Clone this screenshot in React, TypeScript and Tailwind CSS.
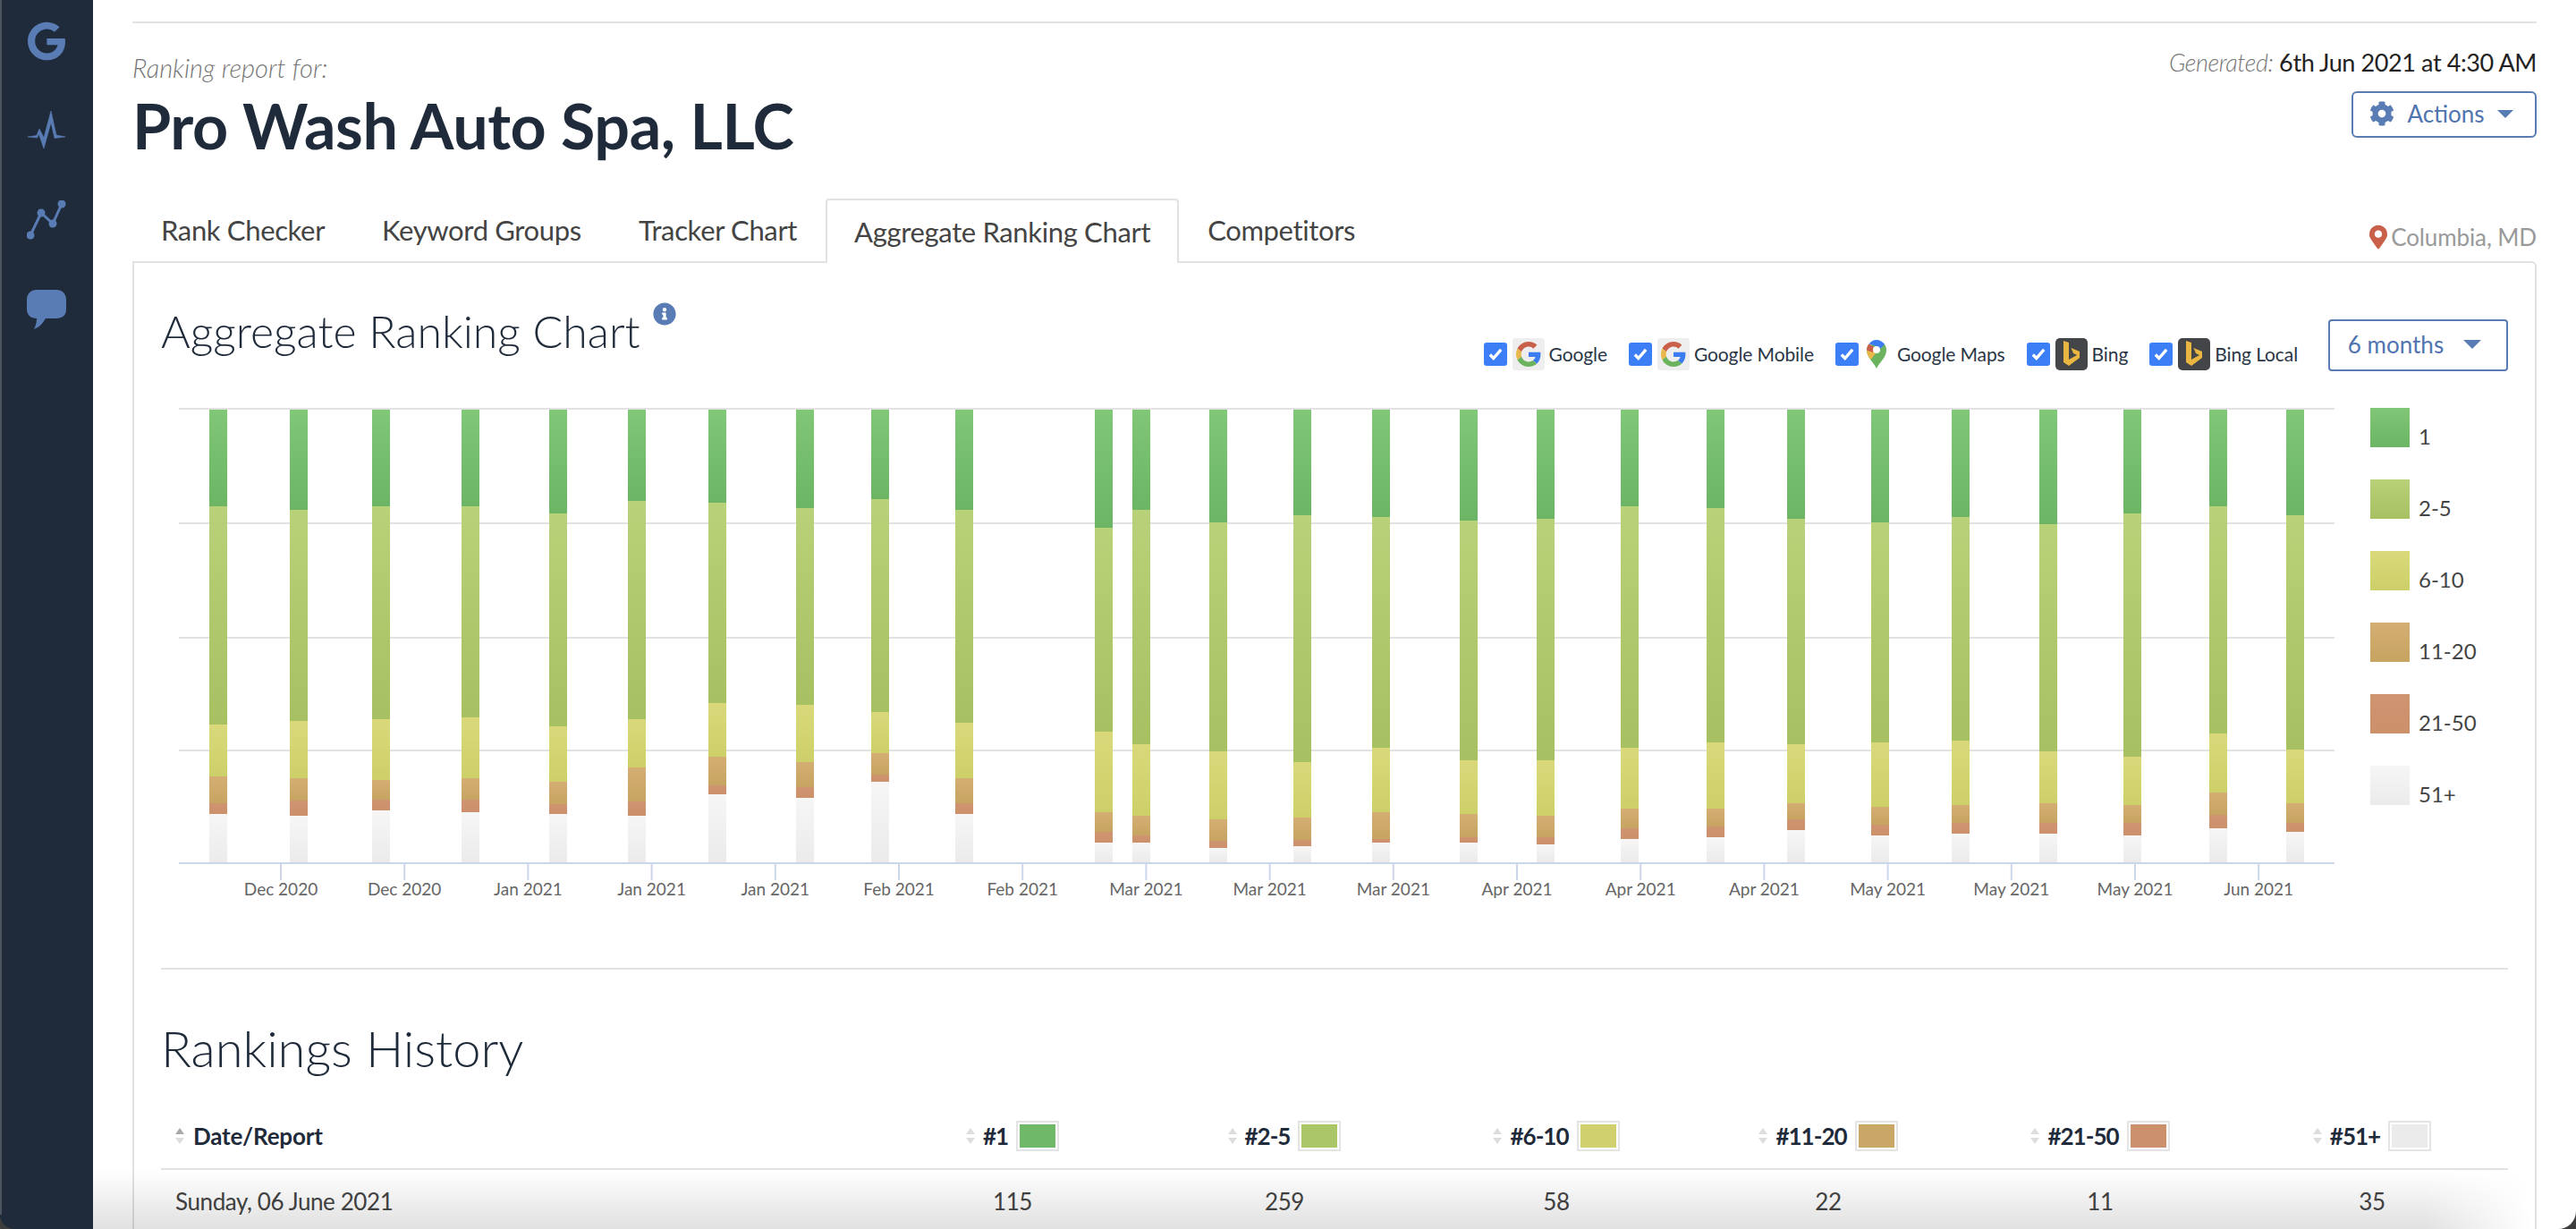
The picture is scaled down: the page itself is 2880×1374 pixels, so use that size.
import { FaCog, FaGoogle, FaInfoCircle, FaMapMarkerAlt } from 'react-icons/fa';

const tabs = ['Rank Checker', 'Keyword Groups', 'Tracker Chart', 'Aggregate Ranking Chart', 'Competitors'];

// left edge of each bar, then the y where each stacked segment ends (page px)
const bars = [
  [234, 566, 810, 868, 898, 910],
  [324, 570, 806, 870, 895, 912],
  [416, 566, 804, 872, 894, 906],
  [516, 566, 802, 870, 894, 908],
  [614, 574, 812, 874, 899, 910],
  [702, 560, 804, 858, 896, 912],
  [792, 562, 786, 846, 878, 888],
  [890, 568, 788, 852, 880, 892],
  [974, 558, 796, 842, 866, 874],
  [1068, 570, 808, 870, 898, 910],
  [1224, 590, 818, 908, 930, 942],
  [1266, 570, 832, 912, 934, 942],
  [1352, 584, 840, 916, 940, 948],
  [1446, 576, 852, 914, 939, 946],
  [1534, 578, 836, 908, 938, 942],
  [1632, 582, 850, 910, 936, 942],
  [1718, 580, 850, 912, 936, 944],
  [1812, 566, 836, 904, 926, 938],
  [1908, 568, 830, 904, 924, 936],
  [1998, 580, 832, 898, 916, 928],
  [2092, 584, 830, 902, 922, 934],
  [2182, 578, 828, 900, 920, 932],
  [2280, 586, 840, 898, 920, 932],
  [2374, 574, 846, 900, 920, 934],
  [2470, 566, 820, 886, 911, 926],
  [2556, 576, 838, 898, 920, 930],
];

const xLabels = [
  'Dec 2020', 'Dec 2020', 'Jan 2021', 'Jan 2021', 'Jan 2021', 'Feb 2021', 'Feb 2021', 'Mar 2021', 'Mar 2021',
  'Mar 2021', 'Apr 2021', 'Apr 2021', 'Apr 2021', 'May 2021', 'May 2021', 'May 2021', 'Jun 2021',
];

const segColors = [
  ['#80c777', '#6bb564'],
  ['#b9d178', '#a6c062'],
  ['#d9d97a', '#cdd069'],
  ['#d4ae72', '#c7a462'],
  ['#cf9470', '#cc906b'],
  ['#f6f6f6', '#ebebeb'],
];

const legend = [
  { label: '1', swatch: 'from-[#80c777] to-[#6bb564]' },
  { label: '2-5', swatch: 'from-[#b9d178] to-[#a6c062]' },
  { label: '6-10', swatch: 'from-[#d9d97a] to-[#cdd069]' },
  { label: '11-20', swatch: 'from-[#d4ae72] to-[#c7a462]' },
  { label: '21-50', swatch: 'from-[#cf9470] to-[#cc906b]' },
  { label: '51+', swatch: 'from-[#f6f6f6] to-[#ebebeb]' },
];

const columns = [
  { label: '#1', color: 'bg-[#6fb868]', value: 115 },
  { label: '#2-5', color: 'bg-[#abc667]', value: 259 },
  { label: '#6-10', color: 'bg-[#d0d16e]', value: 58 },
  { label: '#11-20', color: 'bg-[#c9a766]', value: 22 },
  { label: '#21-50', color: 'bg-[#cc916c]', value: 11 },
  { label: '#51+', color: 'bg-[#ebebeb]', value: 35 },
];

function GoogleIcon() {
  return (
    <span className="flex h-[36px] w-[36px] items-center justify-center rounded-[4px] bg-[#eeeeee]">
      <svg viewBox="0 0 48 48" className="h-[28px] w-[28px]">
        <path fill="#c9604a" d="M24 9.5c3.54 0 6.71 1.22 9.21 3.6l6.85-6.85C35.9 2.38 30.47 0 24 0 14.62 0 6.51 5.38 2.56 13.22l7.98 6.19C12.43 13.72 17.74 9.5 24 9.5z" />
        <path fill="#3b7df0" d="M46.98 24.55c0-1.57-.15-3.09-.38-4.55H24v9.02h12.94c-.58 2.96-2.26 5.48-4.78 7.18l7.73 6c4.51-4.18 7.09-10.36 7.09-17.65z" />
        <path fill="#e8b84a" d="M10.53 28.59c-.48-1.45-.76-2.99-.76-4.59s.27-3.14.76-4.59l-7.98-6.19C.92 16.46 0 20.12 0 24c0 3.88.92 7.54 2.56 10.78l7.97-6.19z" />
        <path fill="#6bb35e" d="M24 48c6.48 0 11.93-2.13 15.89-5.81l-7.73-6c-2.15 1.45-4.92 2.3-8.16 2.3-6.26 0-11.57-4.22-13.47-9.91l-7.98 6.19C6.51 42.62 14.62 48 24 48z" />
      </svg>
    </span>
  );
}

function MapsIcon() {
  return (
    <svg viewBox="0 0 24 32" className="h-[32px] w-[24px]">
      <path fill="#6bb35e" d="M12 32C9 25 1 20 1 11.5 1 9 2 7 3 5.500L21 5c1.500 2 2 4 2 6.500C23 20 15 25 12 32z" />
      <path fill="#e8b84a" d="M1 11.500c0 4 2 7.500 4.500 10.500L11 15 5 9z" />
      <path fill="#c9604a" d="M3.500 4.500C1.800 6.300 1 8.800 1 11.500L8 14l1-6z" />
      <path fill="#3b7df0" d="M3.500 4.500C5.500 1.800 8.500 0 12 0c3.800 0 7 2 9 5l-6 6-3-4z" />
      <circle cx="12" cy="11" r="4" fill="#ffffff" />
    </svg>
  );
}

function BingIcon() {
  return (
    <span className="flex h-[36px] w-[36px] items-center justify-center rounded-[5px] bg-[#444548]">
      <svg viewBox="0 0 24 32" className="h-[32px] w-[24px]">
        <path fill="#e9b741" d="M3 1l6 2v19l9-5-4-2-2.500-6L21 13v7L9 29l-6-4z" />
      </svg>
    </span>
  );
}

function SourceCheck({ icon, label }: { icon: React.ReactNode; label: string }) {
  return (
    <label className="flex items-center">
      <span className="mr-[6px] flex h-[26px] w-[26px] items-center justify-center rounded-[3px] bg-[#3b7ef6]">
        <svg viewBox="0 0 16 16" className="h-[18px] w-[18px]" fill="none" stroke="#ffffff" strokeWidth="3">
          <path d="M2.500 8.500l3.500 3.500 7.500-8.500" />
        </svg>
      </span>
      {icon}
      <span className="ml-[5px] text-[21px] leading-[28px] tracking-[-0.1px] text-[#2a3645]">{label}</span>
    </label>
  );
}

function SortIcon({ active }: { active?: boolean }) {
  return (
    <svg viewBox="0 0 10 18" className="h-[18px] w-[10px] shrink-0">
      <path d="M5 0l5 7H0z" fill={active ? '#a9a9a9' : '#dddddd'} />
      <path d="M5 18l5-7H0z" fill="#dddddd" />
    </svg>
  );
}

function Chart() {
  return (
    <svg width={2412} height={570} className="block shrink-0">
      <defs>
        {segColors.map((c, i) => (
          <linearGradient key={i} id={`seg${i}`} x1="0" y1="0" x2="0" y2="1">
            <stop offset="0" stopColor={c[0]} />
            <stop offset="1" stopColor={c[1]} />
          </linearGradient>
        ))}
      </defs>
      {[456, 584, 712, 838].map(y => (
        <rect key={y} x={0} y={y - 456} width={2410} height={2} fill="#e2e2e2" />
      ))}
      {bars.map(bar => {
        const edges = [458, ...bar.slice(1), 964];
        return edges.slice(0, -1).map((top, i) => (
          <rect
            key={`${bar[0]}-${i}`}
            x={bar[0] - 200}
            y={top - 456}
            width={20}
            height={edges[i + 1] - top}
            fill={`url(#seg${i})`}
          />
        ));
      })}
      <rect x={0} y={508} width={2410} height={2} fill="#ccd6eb" />
      {xLabels.map((label, i) => {
        const x = 113 + i * 138.2;
        return (
          <g key={i}>
            <rect x={x} y={510} width={2} height={18} fill="#ccd6eb" />
            <text x={x + 1} y={545} textAnchor="middle" fontSize={19} fill="#666666" fontFamily="Lato, sans-serif">
              {label}
            </text>
          </g>
        );
      })}
    </svg>
  );
}

export default function App() {
  return (
    <div className="relative flex h-[1374px] w-[2880px] overflow-hidden bg-white font-['Lato',sans-serif]">
      <aside className="flex w-[104px] shrink-0 flex-col items-center border-l-2 border-[#4a5560] bg-[#1f2b3a] pt-[24px] pr-[3px] text-[#5a7cb5]">
        <FaGoogle className="h-[44px] w-[44px]" />
        <svg viewBox="0 0 44 44" className="mt-[56px] h-[44px] w-[44px]" fill="currentColor" stroke="currentColor" strokeWidth="0.6">
          <path d="M1 29l10-1.500L14 20l5 10L27 0l6 27 10 2-12 1.500L27 13l-8 29-5.500-16-2 4z" />
        </svg>
        <svg viewBox="0 0 44 44" className="mt-[56px] h-[44px] w-[44px]" fill="none" stroke="currentColor" strokeWidth="3">
          <path d="M4 39L16 14l13 12L39 4" />
          <circle cx="4" cy="39" r="4.500" fill="currentColor" stroke="none" />
          <circle cx="16" cy="14" r="4.500" fill="currentColor" stroke="none" />
          <circle cx="29" cy="26" r="4.500" fill="currentColor" stroke="none" />
          <circle cx="39" cy="4" r="4.500" fill="currentColor" stroke="none" />
        </svg>
        <svg viewBox="0 0 44 44" className="mt-[56px] h-[44px] w-[44px]" fill="currentColor">
          <path d="M11 0h22c6.500 0 11 4.500 11 11v11c0 6.500-4.500 10-11 10H21C18 37 14 42 8 44c2-4 3-8 3-12C4.500 32 0 28 0 22V11C0 4.500 4.500 0 11 0z" />
        </svg>
      </aside>

      <main className="flex min-w-0 flex-1 flex-col px-[44px] pt-[24px]">
        <div className="h-[2px] shrink-0 bg-[#e2e2e2]" />

        <header className="flex h-[196px] shrink-0 justify-between">
          <div>
            <p className="pt-[32px] text-[29px] leading-[36px] font-light italic text-[#777777]">Ranking report for:</p>
            <h1 className="mt-[6px] text-[70px] leading-[80px] font-bold tracking-[-0.4px] text-[#1f2b3a]">Pro Wash Auto Spa, LLC</h1>
          </div>
          <div className="flex flex-col items-end">
            <p className="pt-[26px] text-[27px] leading-[36px] tracking-[-0.4px] text-[#222222]">
              <span className="font-light italic text-[#777777]">Generated:</span> 6th Jun 2021 at 4:30 AM
            </p>
            <button className="mt-[14px] flex h-[52px] w-[207px] items-center justify-center rounded-[6px] border-2 border-[#5a7cb5] pr-[6px] pb-[2px] text-[26px] text-[#4f74b0]">
              <FaCog className="mr-[14px] h-[28px] w-[28px] text-[#5a7cb5]" />
              Actions
              <span className="ml-[14px] h-0 w-0 border-x-[9px] border-t-[9px] border-x-transparent border-t-[#5a7cb5]" />
            </button>
          </div>
        </header>

        <nav className="flex h-[70px] shrink-0 items-stretch">
          {tabs.map((tab, i) =>
            i === 3 ? (
              <div
                key={tab}
                className="relative z-10 -mb-[2px] flex items-center rounded-t-[4px] border-2 border-b-0 border-[#e2e2e2] bg-white px-[30px] text-[31px] tracking-[-0.35px] text-[#444444]"
              >
                {tab}
              </div>
            ) : (
              <div key={tab} className="flex items-center border-2 border-transparent px-[30px] text-[31px] tracking-[-0.35px] text-[#444444]">
                {tab}
              </div>
            )
          )}
          <div className="ml-auto flex items-center pt-[16px] text-[26px] tracking-[-0.1px] text-[#999999]">
            <FaMapMarkerAlt className="mr-[4px] h-[28px] w-[20px] text-[#c9604a]" />
            Columbia, MD
          </div>
        </nav>

        <section className="flex-1 rounded-tr-[6px] border-2 border-[#e2e2e2] px-[30px]">
          <div className="flex h-[162px] justify-between">
            <div className="flex items-start pt-[41px]">
              <h2 className="text-[50px] leading-[70px] font-light text-[#1f2b3a]">Aggregate Ranking Chart</h2>
              <FaInfoCircle className="mt-[3px] ml-[14px] h-[26px] w-[26px] text-[#5a7cb5]" />
            </div>
            <div className="flex items-start pt-[63px]">
              <div className="mt-[21px] flex items-center gap-[24px]">
                <SourceCheck icon={<GoogleIcon />} label="Google" />
                <SourceCheck icon={<GoogleIcon />} label="Google Mobile" />
                <SourceCheck icon={<span className="mr-[6px] ml-[2px] flex"><MapsIcon /></span>} label="Google Maps" />
                <SourceCheck icon={<BingIcon />} label="Bing" />
                <SourceCheck icon={<BingIcon />} label="Bing Local" />
              </div>
              <button className="ml-[34px] flex h-[58px] w-[201px] items-center justify-center rounded-[4px] border-2 border-[#5a7cb5] pr-[8px] pb-[2px] text-[26px] text-[#4f74b0]">
                6 months
                <span className="ml-[22px] h-0 w-0 border-x-[10px] border-t-[10px] border-x-transparent border-t-[#5a7cb5]" />
              </button>
            </div>
          </div>

          <div className="flex pl-[20px]">
            <Chart />
            <ul className="ml-[38px] flex flex-col gap-[36px]">
              {legend.map(item => (
                <li key={item.label} className="flex items-end gap-[10px]">
                  <span className={`h-[44px] w-[44px] bg-linear-to-b ${item.swatch}`} />
                  <span className="-mb-[2px] text-[24px] leading-[28px] text-[#444444]">{item.label}</span>
                </li>
              ))}
            </ul>
          </div>

          <div className="mt-[56px] h-[2px] bg-[#e2e2e2]" />

          <h2 className="mt-[53px] text-[56px] leading-[70px] font-light text-[#1f2b3a]">Rankings History</h2>

          <div className="mt-[29px] grid h-[72px] grid-cols-[800px_repeat(6,304px)] items-center border-b-2 border-[#e2e2e2] pb-[2px]">
            <div className="flex items-center gap-[10px] pl-[16px] text-[26px] font-bold tracking-[-0.2px] text-[#1f2b3a]">
              <SortIcon active />
              Date/Report
            </div>
            {columns.map(col => (
              <div key={col.label} className="flex items-center justify-center gap-[9px] text-[26px] font-bold tracking-[-1px] text-[#1f2b3a]">
                <SortIcon />
                {col.label}
                <span className="flex h-[34px] w-[48px] border-2 border-[#e4e4e4] p-[2px]">
                  <span className={`flex-1 ${col.color}`} />
                </span>
              </div>
            ))}
          </div>

          <div className="grid h-[70px] grid-cols-[800px_repeat(6,304px)] items-center text-[26px] tracking-[-0.4px] text-[#444444]">
            <div className="pl-[16px]">Sunday, 06 June 2021</div>
            {columns.map(col => (
              <div key={col.label} className="text-center">{col.value}</div>
            ))}
          </div>
        </section>
      </main>

      {/* window shadow creeping over the bottom of the page */}
      <div className="pointer-events-none absolute right-0 bottom-0 left-[104px] h-[66px] bg-linear-to-b from-transparent to-black/12 [mask-image:linear-gradient(to_left,transparent_50px,black_170px)]" />
      <div className="absolute right-0 bottom-0 h-[20px] w-[20px] bg-[#3d3d3d]">
        <div className="h-full w-full rounded-br-[20px] bg-white" />
      </div>
      <div className="absolute bottom-0 left-0 h-[16px] w-[16px] bg-[#3d3d3d]">
        <div className="h-full w-full rounded-bl-[16px] bg-[#1f2b3a]" />
      </div>
    </div>
  );
}
